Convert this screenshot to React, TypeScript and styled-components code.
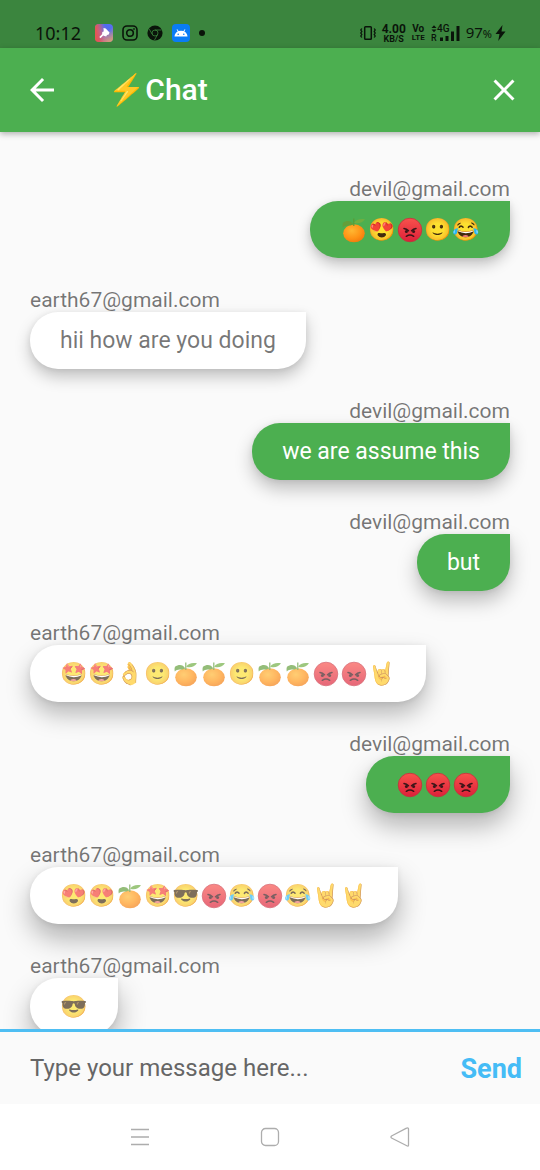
import React, { useState } from "react";
import styled, { createGlobalStyle } from "styled-components";

const GlobalStyle = createGlobalStyle`
  * { box-sizing: border-box; }
  body { margin: 0; background: #fafafa; font-family: Roboto, "Noto Color Emoji", sans-serif; }
  button, input { font-family: inherit; border: 0; background: none; padding: 0; margin: 0; }
  svg { display: block; flex: none; }
`;

const Screen = styled.div`
  display: flex;
  flex-direction: column;
  height: 100vh;
`;

const StatusBar = styled.div`
  display: flex;
  justify-content: space-between;
  align-items: center;
  padding: 18px 34px 0 35px;
  height: 48px;
  flex: none;
  background: #3b853e;
  color: #0a140a;
`;

const StatusLeft = styled.div`
  display: flex;
  align-items: center;
  gap: 9px;
`;

const StatusRight = styled.div`
  display: flex;
  align-items: center;
  gap: 6px;
`;

const Clock = styled.time`
  font: 400 18px/24px "Noto Sans", sans-serif;
  margin-right: 5px;
`;

const Stack = styled.span`
  display: flex;
  flex-direction: column;
  align-items: center;
  font-weight: 700;
`;

const StackLine = styled.span<{ $size: number }>`
  font-size: ${(p) => p.$size}px;
  line-height: ${(p) => p.$size}px;
`;

const Battery = styled.span`
  display: flex;
  align-items: center;
  gap: 3px;
  font: 400 15px/20px "Noto Sans", sans-serif;
`;

const Percent = styled.small`
  font-size: 11px;
`;

const AppBar = styled.header`
  display: flex;
  align-items: center;
  height: 84px;
  flex: none;
  background: #4caf50;
  color: #fff;
  box-shadow: 0 2px 6px rgba(0, 0, 0, 0.3);
  z-index: 1;
`;

const IconButton = styled.button<{ $width: number }>`
  display: flex;
  align-items: center;
  justify-content: center;
  width: ${(p) => p.$width}px;
  height: 72px;
  color: inherit;
  cursor: pointer;
`;

const Title = styled.h1`
  flex: 1;
  margin: 0;
  padding-left: 24px;
  font-size: 30px;
  line-height: 36px;
  font-weight: 500;
`;

const MessageList = styled.ul`
  flex: 1;
  min-height: 0;
  margin: 0;
  padding: 30px 15px;
  list-style: none;
  overflow-y: auto;
  scrollbar-width: none;
`;

const Message = styled.li<{ $mine: boolean }>`
  display: flex;
  flex-direction: column;
  align-items: ${(p) => (p.$mine ? "flex-end" : "flex-start")};
  padding: 15px;
`;

const Sender = styled.span`
  font-size: 21px;
  line-height: 24px;
  color: rgba(0, 0, 0, 0.54);
`;

const Bubble = styled.p<{ $mine: boolean; $lift: number }>`
  margin: 0;
  padding: 15px 30px;
  border-radius: 28px 0 28px 28px;
  font-size: 23px;
  line-height: 27px;
  background: ${(p) => (p.$mine ? "#4caf50" : "#fff")};
  color: ${(p) => (p.$mine ? "#fff" : "rgba(0, 0, 0, 0.54)")};
  box-shadow:
    0 ${(p) => p.$lift}px ${(p) => p.$lift * 2}px rgba(0, 0, 0, ${(p) => (10 + p.$lift) / 80}),
    0 1px 6px rgba(0, 0, 0, 0.08);
`;

const Emoji = styled.span<{ $faded: boolean }>`
  display: inline-block;
  width: 28px;
  height: 27px;
  vertical-align: top;
  text-align: center;
  font-size: 22px;
  color: #000;
  opacity: ${(p) => (p.$faded ? 0.68 : 1)};
`;

const EmojiDrawing = styled.svg`
  margin: 1px auto 0;
`;

const Composer = styled.form`
  display: flex;
  align-items: center;
  height: 75px;
  flex: none;
  border-top: 3px solid #4ebef3;
  background: #fafafa;
`;

const MessageInput = styled.input`
  flex: 1;
  min-width: 0;
  height: 72px;
  padding: 0 30px;
  font-size: 24px;
  line-height: 28px;
  color: #212121;
  outline: 0;
  &::placeholder {
    color: #666;
    opacity: 1;
  }
`;

const SendButton = styled.button`
  padding: 2px 18px 0 0;
  font-size: 27px;
  line-height: 32px;
  font-weight: 700;
  color: #45bcf6;
  cursor: pointer;
`;

const NavBar = styled.nav`
  display: grid;
  grid-template-columns: repeat(3, 24%);
  justify-content: center;
  height: 66px;
  flex: none;
  background: #fff;
`;

const NavButton = styled.button`
  display: flex;
  align-items: center;
  justify-content: center;
  color: #adadad;
  cursor: pointer;
`;

const ME = "devil@gmail.com";
const FRIEND = "earth67@gmail.com";

const initialMessages = [
  { sender: ME, text: "🍊😍😡🙂😂", lift: 7 },
  { sender: FRIEND, text: "hii how are you doing", lift: 8 },
  { sender: ME, text: "we are assume this", lift: 9 },
  { sender: ME, text: "but", lift: 10 },
  { sender: FRIEND, text: "🤩🤩👌🙂🍊🍊🙂🍊🍊😡😡🤘", lift: 12 },
  { sender: ME, text: "😡😡😡", lift: 13 },
  { sender: FRIEND, text: "😍😍🍊🤩😎😡😂😡😂🤘🤘", lift: 14 },
  { sender: FRIEND, text: "😎", lift: 14 },
];

const Tangerine = () => (
  <EmojiDrawing width="26" height="26" viewBox="0 0 26 26" role="img" aria-label="🍊">
    <defs>
      <radialGradient id="peel" cx="0.4" cy="0.35" r="0.7">
        <stop offset="0" stopColor="#ffb732" />
        <stop offset="0.6" stopColor="#ff9416" />
        <stop offset="1" stopColor="#f2790c" />
      </radialGradient>
    </defs>
    <ellipse cx="13" cy="16.300" rx="10.800" ry="9" fill="url(#peel)" />
    <path d="M12.800 9V1.500" stroke="#5c9a35" strokeWidth="1.200" fill="none" />
    <path d="M12.300 7.500C10 3.600 6 3 2 5.800c-.6 1.600-.6 3-.2 4.600C4.500 7.500 8.500 9.500 12.300 7.500z" fill="#639f3a" />
    <path d="M13.200 5.800C15 2.300 19 1.400 24 2.200 21.500 5.800 17.500 7.200 13.200 5.800z" fill="#6fae42" />
  </EmojiDrawing>
);

const AngryFace = () => (
  <EmojiDrawing width="26" height="26" viewBox="0 0 26 26" role="img" aria-label="😡">
    <defs>
      <linearGradient id="rage" x1="0" y1="0" x2="0" y2="1">
        <stop offset="0" stopColor="#f9524c" />
        <stop offset="1" stopColor="#dc2039" />
      </linearGradient>
    </defs>
    <circle cx="13" cy="13" r="11.800" fill="url(#rage)" stroke="#c62f3c" strokeWidth="0.800" />
    <g fill="none" stroke="#3a1518" strokeWidth="1.500" strokeLinecap="round">
      <path d="M7 11.500c1.500.2 3.200 1 4.500 2.300M19 11.500c-1.500.2-3.200 1-4.500 2.300M9.300 19.300q3.700-2.500 7.400 0" />
    </g>
    <circle cx="9.400" cy="14.600" r="1.500" fill="#3a1518" />
    <circle cx="16.600" cy="14.600" r="1.500" fill="#3a1518" />
  </EmojiDrawing>
);

const drawings: Record<string, React.ReactNode> = {
  "🍊": <Tangerine />,
  "😡": <AngryFace />,
};

const MessageText = ({ text, faded }: { text: string; faded: boolean }) => (
  <>
    {text.split(/(\p{Extended_Pictographic})/u).filter(Boolean).map((part, index) =>
      /\p{Extended_Pictographic}/u.test(part)
        ? <Emoji key={index} $faded={faded}>{drawings[part] ?? part}</Emoji>
        : part
    )}
  </>
);

const GalleryIcon = () => (
  <svg width="18" height="18" viewBox="0 0 18 18" aria-hidden="true">
    <defs>
      <linearGradient id="gallery" x1="0" y1="1" x2="1" y2="0">
        <stop offset="0" stopColor="#e0435a" />
        <stop offset="0.4" stopColor="#a86fb4" />
        <stop offset="0.75" stopColor="#4f6cf0" />
        <stop offset="1" stopColor="#5b6df2" />
      </linearGradient>
      <linearGradient id="galleryWarm" x1="0" y1="0" x2="1" y2="1">
        <stop offset="0.55" stopColor="#e8a860" stopOpacity="0" />
        <stop offset="1" stopColor="#e2a56c" />
      </linearGradient>
      <linearGradient id="galleryRed" x1="0" y1="0" x2="1" y2="0">
        <stop offset="0" stopColor="#e8554f" />
        <stop offset="0.5" stopColor="#e8554f" stopOpacity="0" />
      </linearGradient>
    </defs>
    <rect width="18" height="18" rx="4" fill="url(#gallery)" />
    <rect width="18" height="18" rx="4" fill="url(#galleryWarm)" />
    <rect width="18" height="18" rx="4" fill="url(#galleryRed)" />
    <path d="M8.500 4l2.200 .5L14.500 8.500 13.800 10.500l-1.800.6-.8 1.400-1.800-.4-1.200-.6-2.700 2.700-1.200-1.200 2.800-2.700.2-2.200 1.400-.6z" fill="#fff" />
  </svg>
);

const CameraIcon = () => (
  <svg width="16" height="16" viewBox="0 0 16 16" fill="none" stroke="currentColor" strokeWidth="1.600" aria-hidden="true">
    <rect x="1" y="1" width="14" height="14" rx="4" />
    <circle cx="8" cy="8" r="3.300" />
    <circle cx="12" cy="4" r="0.500" strokeWidth="1" />
  </svg>
);

const BrowserIcon = () => (
  <svg width="16" height="16" viewBox="0 0 16 16" aria-hidden="true">
    <circle cx="8" cy="8" r="7.600" fill="currentColor" />
    <g fill="none" stroke="#3b853e" strokeWidth="0.800">
      <circle cx="8" cy="8" r="3" />
      <path d="M8 5h6.500M10.600 9.500L7.500 15M5.400 9.500L2.300 4.200" />
    </g>
  </svg>
);

const RobotIcon = () => (
  <svg width="18" height="18" viewBox="0 0 18 18" aria-hidden="true">
    <rect width="18" height="18" rx="4" fill="#0a7cf5" />
    <path d="M2.500 12.500c.2-2.400 1.400-4 3.200-5L4.600 5.600l.7-.4L6.500 7.100a8 8 0 0 1 5 0l1.200-1.900.7.4-1.100 1.900c1.800 1 3 2.600 3.200 5z" fill="#fff" />
    <circle cx="6.200" cy="10.200" r="0.800" fill="#0a7cf5" />
    <circle cx="11.800" cy="10.200" r="0.800" fill="#0a7cf5" />
  </svg>
);

const DotIcon = () => (
  <svg width="6" height="6" viewBox="0 0 6 6" aria-hidden="true">
    <circle cx="3" cy="3" r="3" fill="currentColor" />
  </svg>
);

const VibrateIcon = () => (
  <svg width="16" height="16" viewBox="0 0 16 16" fill="none" stroke="currentColor" aria-hidden="true">
    <rect x="4.700" y="1.700" width="6.600" height="12.600" rx="0.800" strokeWidth="1.500" />
    <path d="M1.800 3.500L.8 5l1 1.500-1 1.500 1 1.500-1 1.500 1 1.500M14.200 3.500l1 1.500-1 1.500 1 1.500-1 1.500 1 1.500-1 1.500" strokeWidth="1.300" />
  </svg>
);

const SignalIcon = () => (
  <svg width="29" height="18" viewBox="0 0 29 18" fill="currentColor" fontWeight="500" role="img" aria-label="4G signal">
    <path d="M.5 4L3 1.200 5.500 4zM.5 5.500h5L3 8.200z" />
    <text x="6" y="8" fontSize="10">4G</text>
    <text x="0" y="17" fontSize="9">R</text>
    <path d="M9 13.500h3V17H9zM14.500 12h3v5h-3zM20 7.500h3V17h-3zM25.500 2h3v15h-3z" />
  </svg>
);

const ChargeIcon = () => (
  <svg width="11" height="18" viewBox="0 0 11 18" aria-hidden="true">
    <path d="M7.500 1L.5 10h4L3.200 17 10.500 7.500h-4z" fill="currentColor" />
  </svg>
);

const BackIcon = () => (
  <svg width="36" height="36" viewBox="0 0 24 24" aria-hidden="true">
    <path d="M20 11H7.830l5.590-5.590L12 4l-8 8 8 8 1.410-1.410L7.830 13H20z" fill="currentColor" />
  </svg>
);

const CloseIcon = () => (
  <svg width="36" height="36" viewBox="0 0 24 24" aria-hidden="true">
    <path d="M19 6.410L17.590 5 12 10.590 6.410 5 5 6.410 10.590 12 5 17.590 6.410 19 12 13.410 17.590 19 19 17.590 13.410 12z" fill="currentColor" />
  </svg>
);

const NavIcon = ({ children }: { children: React.ReactNode }) => (
  <svg width="20" height="20" viewBox="0 0 20 20" fill="none" stroke="currentColor" strokeWidth="1.300" strokeLinejoin="round" aria-hidden="true">
    {children}
  </svg>
);

export default function App() {
  const [messages, setMessages] = useState(initialMessages);
  const [draft, setDraft] = useState("");

  const send = (event: React.FormEvent) => {
    event.preventDefault();
    if (!draft.trim()) return;
    setMessages([...messages, { sender: ME, text: draft, lift: 14 }]);
    setDraft("");
  };

  return (
    <Screen>
      <GlobalStyle />
      <StatusBar>
        <StatusLeft>
          <Clock>10:12</Clock>
          <GalleryIcon />
          <CameraIcon />
          <BrowserIcon />
          <RobotIcon />
          <DotIcon />
        </StatusLeft>
        <StatusRight>
          <VibrateIcon />
          <Stack>
            <StackLine $size={12}>4.00</StackLine>
            <StackLine $size={9}>KB/S</StackLine>
          </Stack>
          <Stack>
            <StackLine $size={10}>Vo</StackLine>
            <StackLine $size={8}>LTE</StackLine>
          </Stack>
          <SignalIcon />
          <Battery>
            <span>97<Percent>%</Percent></span>
            <ChargeIcon />
          </Battery>
        </StatusRight>
      </StatusBar>

      <AppBar>
        <IconButton type="button" aria-label="Back" $width={84}>
          <BackIcon />
        </IconButton>
        <Title>⚡️Chat</Title>
        <IconButton type="button" aria-label="Close" $width={72}>
          <CloseIcon />
        </IconButton>
      </AppBar>

      <MessageList>
        {messages.map((message, index) => {
          const mine = message.sender === ME;
          return (
            <Message key={index} $mine={mine}>
              <Sender>{message.sender}</Sender>
              <Bubble $mine={mine} $lift={message.lift}>
                <MessageText text={message.text} faded={!mine} />
              </Bubble>
            </Message>
          );
        })}
      </MessageList>

      <Composer onSubmit={send}>
        <MessageInput
          aria-label="Message"
          placeholder="Type your message here..."
          value={draft}
          onChange={(event) => setDraft(event.target.value)}
        />
        <SendButton type="submit">Send</SendButton>
      </Composer>

      <NavBar aria-label="System">
        <NavButton type="button" aria-label="Recent apps">
          <NavIcon><path d="M1 2.500h18M1 10h18M1 17.500h18" /></NavIcon>
        </NavButton>
        <NavButton type="button" aria-label="Home">
          <NavIcon><rect x="1.500" y="1.500" width="17" height="17" rx="4" /></NavIcon>
        </NavButton>
        <NavButton type="button" aria-label="Back to previous app">
          <NavIcon><path d="M17.500 .8q1 0 1 1v16.400q0 1.200-1.200 .8L1.500 11q-1-1 0-2L16.500 1.200q.5-.4 1-.4z" /></NavIcon>
        </NavButton>
      </NavBar>
    </Screen>
  );
}
